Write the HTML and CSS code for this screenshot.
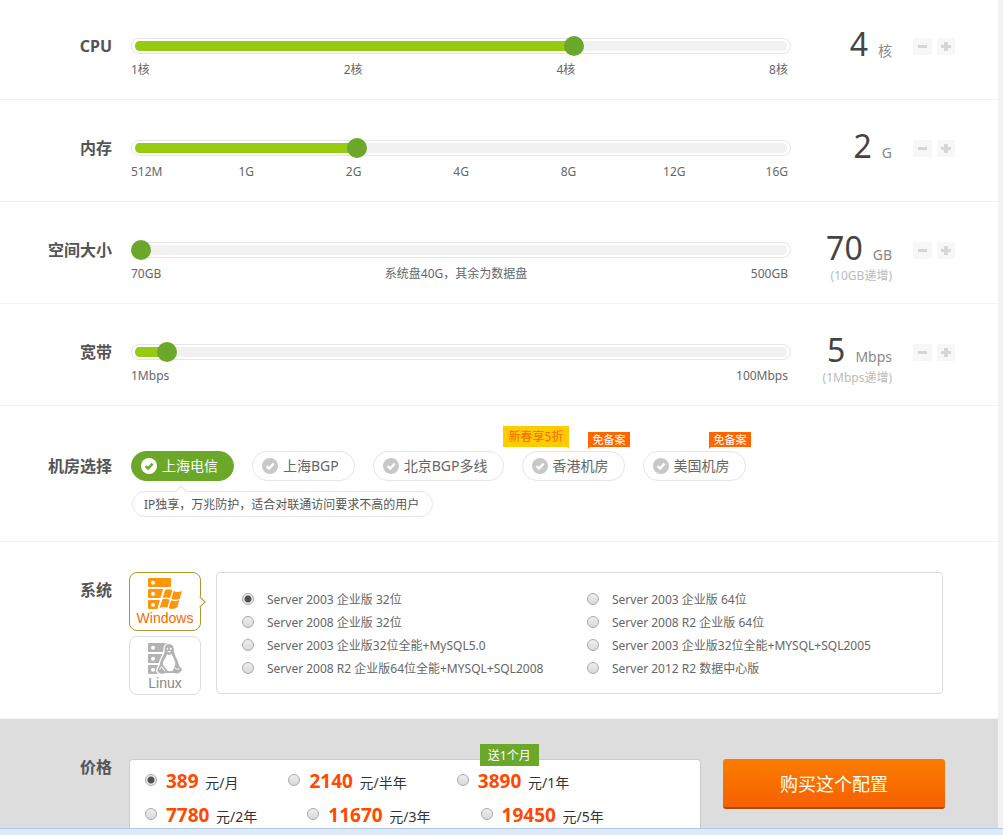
FILE: index.html
```html
<!DOCTYPE html>
<html lang="zh-CN">
<head>
<meta charset="utf-8">
<title>云主机配置</title>
<link rel="stylesheet" href="styles.css">
</head>
<body>
<svg class="sprite" aria-hidden="true">
  <symbol id="check" viewBox="0 0 16 16">
    <circle cx="8" cy="8" r="8" fill="currentColor" stroke="none"/>
    <path d="M4.6 8.2 7.1 10.6 11.6 5.6" fill="none" stroke-width="2.4"/>
  </symbol>
</svg>
<form class="config">
  <section class="row row--first">
    <label class="row__label" for="cpu">CPU</label>
    <div class="control">
      <div class="slider"><div class="slider__bar" style="--fill:67.7%"></div><input class="slider__input" id="cpu" type="range" min="0" max="1000" value="677"></div>
      <div class="scale"><span>1核</span><span>2核</span><span>4核</span><span>8核</span></div>
    </div>
    <div class="value"><div class="value__main"><b class="value__num">4</b><span class="value__unit">核</span></div></div>
    <div class="stepper"><button class="step step--minus" type="button" aria-label="减少"></button><button class="step step--plus" type="button" aria-label="增加"></button></div>
  </section>
  <section class="row">
    <label class="row__label" for="mem">内存</label>
    <div class="control">
      <div class="slider"><div class="slider__bar" style="--fill:33.8%"></div><input class="slider__input" id="mem" type="range" min="0" max="1000" value="338"></div>
      <div class="scale scale--mem"><span>512M</span><span>1G</span><span>2G</span><span>4G</span><span>8G</span><span>12G</span><span>16G</span></div>
    </div>
    <div class="value"><div class="value__main"><b class="value__num">2</b><span class="value__unit">G</span></div></div>
    <div class="stepper"><button class="step step--minus" type="button" aria-label="减少"></button><button class="step step--plus" type="button" aria-label="增加"></button></div>
  </section>
  <section class="row">
    <label class="row__label" for="disk">空间大小</label>
    <div class="control">
      <div class="slider"><div class="slider__bar" style="--fill:0%"></div><input class="slider__input" id="disk" type="range" min="70" max="500" value="70"></div>
      <div class="scale"><span>70GB</span><span>系统盘40G，其余为数据盘</span><span>500GB</span></div>
    </div>
    <div class="value"><div class="value__main"><b class="value__num">70</b><span class="value__unit">GB</span></div><div class="value__note">(10GB递增)</div></div>
    <div class="stepper"><button class="step step--minus" type="button" aria-label="减少"></button><button class="step step--plus" type="button" aria-label="增加"></button></div>
  </section>
  <section class="row">
    <label class="row__label" for="band">宽带</label>
    <div class="control">
      <div class="slider"><div class="slider__bar" style="--fill:4%"></div><input class="slider__input" id="band" type="range" min="1" max="100" value="5"></div>
      <div class="scale"><span>1Mbps</span><span>100Mbps</span></div>
    </div>
    <div class="value"><div class="value__main"><b class="value__num">5</b><span class="value__unit">Mbps</span></div><div class="value__note">(1Mbps递增)</div></div>
    <div class="stepper"><button class="step step--minus" type="button" aria-label="减少"></button><button class="step step--plus" type="button" aria-label="增加"></button></div>
  </section>

  <section class="row row--room">
    <div class="row__label">机房选择</div>
    <div class="control">
      <div class="rooms">
        <button class="room room--on" type="button"><svg class="room__icon"><use href="#check"/></svg>上海电信</button>
        <button class="room" type="button"><svg class="room__icon"><use href="#check"/></svg>上海BGP</button>
        <button class="room" type="button"><svg class="room__icon"><use href="#check"/></svg>北京BGP多线</button>
        <button class="room" type="button"><svg class="room__icon"><use href="#check"/></svg>香港机房<span class="promo">新春享5折</span><span class="flag">免备案</span></button>
        <button class="room" type="button"><svg class="room__icon"><use href="#check"/></svg>美国机房<span class="flag">免备案</span></button>
      </div>
      <div class="tip">IP独享，万兆防护，适合对联通访问要求不高的用户</div>
    </div>
  </section>

  <section class="row row--os">
    <div class="row__label">系统</div>
    <div class="os">
      <div class="os__tabs">
        <button class="os-tab os-tab--on" type="button">
          <svg class="os-tab__icon" viewBox="0 0 102 93" aria-hidden="true">
            <g fill="#ff950a"><rect width="69" height="27" rx="3"/><rect y="33" width="69" height="27" rx="3"/><rect y="66" width="69" height="27" rx="3"/></g>
            <g fill="#fff"><circle cx="15" cy="14" r="6"/><circle cx="15" cy="47" r="6"/><circle cx="15" cy="80" r="6"/><path d="M46 30Q60 26 75 33Q90 42 108 32L93 93H28Z"/></g>
            <g fill="#ff950a"><path d="M51 36Q62 31 73 37L66 61Q55 56 44 60Z"/><path d="M77 39Q89 45 102 39L95 63Q83 68 70 63Z"/><path d="M43 64Q54 60 65 65L58 89Q47 84 35 90Z"/><path d="M69 67Q82 72 94 67L88 88Q75 96 62 91Z"/></g>
          </svg>
          <span>Windows</span>
        </button>
        <button class="os-tab" type="button">
          <svg class="os-tab__icon" viewBox="0 0 102 93" aria-hidden="true">
            <g fill="#b3b3b3"><rect width="69" height="27" rx="3"/><rect y="33" width="69" height="27" rx="3"/><rect y="66" width="69" height="27" rx="3"/></g>
            <g fill="#fff"><circle cx="15" cy="14" r="6"/><circle cx="15" cy="47" r="6"/><circle cx="15" cy="80" r="6"/></g>
            <path d="M63 4C52 4 49 12 50 22C51 34 39 46 37 58C36 66 30 76 28 82C28 91 42 95 52 90H80C88 95 101 88 102 78C94 72 93 66 90 56C86 44 78 36 78 24C78 12 74 4 63 4Z" fill="#b3b3b3" stroke="#fff" stroke-width="8" paint-order="stroke"/>
            <path d="M57 33Q64 39 71 32C74 43 82 50 82 63C82 67 79 68 78 74Q77 84 66 85Q58 85 55 79L45 66C44 52 55 45 57 33Z" fill="#fff"/>
            <g fill="#fff"><ellipse cx="58" cy="17" rx="2" ry="3"/><ellipse cx="68" cy="17" rx="3" ry="3"/><path d="M57 26Q63 22 70 26Q64 30 57 26Z"/></g>
            <path d="M35 79 41 71 51 85" fill="none" stroke="#fff" stroke-width="3"/>
            <path d="M80 73Q83 81 94 78" fill="none" stroke="#fff" stroke-width="3"/>
          </svg>
          <span>Linux</span>
        </button>
      </div>
      <div class="os__list">
        <label class="opt"><input class="radio" type="radio" name="os" checked>Server 2003 企业版 32位</label>
        <label class="opt"><input class="radio" type="radio" name="os">Server 2003 企业版 64位</label>
        <label class="opt"><input class="radio" type="radio" name="os">Server 2008 企业版 32位</label>
        <label class="opt"><input class="radio" type="radio" name="os">Server 2008 R2 企业版 64位</label>
        <label class="opt"><input class="radio" type="radio" name="os">Server 2003 企业版32位全能+MySQL5.0</label>
        <label class="opt"><input class="radio" type="radio" name="os">Server 2003 企业版32位全能+MYSQL+SQL2005</label>
        <label class="opt"><input class="radio" type="radio" name="os">Server 2008 R2 企业版64位全能+MYSQL+SQL2008</label>
        <label class="opt"><input class="radio" type="radio" name="os">Server 2012 R2 数据中心版</label>
      </div>
    </div>
  </section>

  <section class="row row--price">
    <div class="row__label">价格</div>
    <div class="prices">
      <div class="prices__line">
        <label class="price"><input class="radio" type="radio" name="price" checked><span><b class="price__num">389</b> 元/月</span></label>
        <label class="price"><input class="radio" type="radio" name="price"><span><b class="price__num">2140</b> 元/半年</span></label>
        <label class="price"><input class="radio" type="radio" name="price"><span><b class="price__num">3890</b> 元/1年</span><span class="gift">送1个月</span></label>
      </div>
      <div class="prices__line">
        <label class="price"><input class="radio" type="radio" name="price"><span><b class="price__num">7780</b> 元/2年</span></label>
        <label class="price"><input class="radio" type="radio" name="price"><span><b class="price__num">11670</b> 元/3年</span></label>
        <label class="price"><input class="radio" type="radio" name="price"><span><b class="price__num">19450</b> 元/5年</span></label>
      </div>
    </div>
    <button class="buy" type="button">购买这个配置</button>
  </section>
</form>
<div class="statusbar"></div>
</body>
</html>
```
FILE: styles.css
```css
* { box-sizing: border-box; }
body {
  margin: 0;
  min-height: 100vh;
  display: flex;
  flex-direction: column;
  background: #f2f2f2;
  color: #666;
  font: 12px/18px "Noto Sans", "Noto Sans CJK SC", sans-serif;
}
button { font: inherit; color: inherit; padding: 0; cursor: pointer; }
.sprite { display: none; }

.config {
  flex: 1;
  display: flex;
  flex-direction: column;
  margin-right: 5px;
  background: #fff;
}

/* rows */
.row {
  display: grid;
  grid-template-columns: 113px minmax(0, 1fr) 84px 44px;
  column-gap: 18px;
  align-items: start;
  min-height: 102px;
  padding: 25px 43px 0 0;
  border-bottom: 1px solid #f2f2f2;
}
.row--first { padding-top: 23px; min-height: 100px; }
.row__label {
  margin-top: 13px;
  padding-right: 1px;
  font-size: 16px;
  line-height: 20px;
  font-weight: bold;
  text-align: right;
  color: #555;
}

/* slider */
.slider { display: grid; align-items: center; margin-top: 13px; }
.slider__bar {
  grid-area: 1 / 1;
  height: 16px;
  padding: 2px 3px;
  border: 1px solid #e5e5e5;
  border-radius: 8px;
  background: linear-gradient(to right, #97cb12 var(--fill), #f1f1f1 var(--fill)) content-box;
}
.slider__input {
  grid-area: 1 / 1;
  appearance: none;
  width: 100%;
  height: 20px;
  margin: 0;
  background: none;
}
.slider__input::-webkit-slider-thumb {
  appearance: none;
  width: 20px;
  height: 20px;
  border-radius: 50%;
  background: #6ba82a;
}
.scale {
  display: flex;
  justify-content: space-between;
  margin-top: 5px;
  padding-right: 3px;
}
.scale--mem {
  display: grid;
  grid-template-columns: repeat(4, 107fr) repeat(2, 102fr) auto;
}

.value { padding-right: 1px; text-align: right; white-space: nowrap; }
.value__main {
  display: flex;
  justify-content: flex-end;
  align-items: baseline;
  gap: 10px;
  height: 40px;
  line-height: 42px;
}
.value__num { font-size: 32px; font-weight: normal; color: #444; }
.value__unit { font-size: 14px; color: #888; }
.value__note { color: #bbb; }

.stepper { display: flex; justify-content: flex-end; gap: 5px; margin-top: 15px; }
.step {
  width: 18px;
  height: 17px;
  border: 0;
  border-radius: 1px;
  background: linear-gradient(#d6d6d6, #d6d6d6) center / 9px 3px no-repeat #f7f7f7;
}
.step--minus { width: 19px; }
.step--plus {
  background:
    linear-gradient(#d6d6d6, #d6d6d6) center / 10px 3px no-repeat,
    linear-gradient(#d6d6d6, #d6d6d6) center / 4px 9px no-repeat #f7f7f7;
}

/* machine room */
.row--room {
  grid-template-columns: 113px minmax(0, 1fr);
  padding: 45px 43px 24px 0;
}
.row--room .row__label { margin-top: 0; line-height: 30px; }
.rooms { display: flex; gap: 18px; }
.room {
  position: relative;
  display: flex;
  align-items: center;
  gap: 5px;
  height: 30px;
  padding: 0 15px 0 9px;
  border: 1px solid #e5e5e5;
  border-radius: 15px;
  background: #fff;
  font-size: 14px;
  white-space: nowrap;
}
.room--on { border-color: #6ba82a; background: #6ba82a; color: #fff; }
.room__icon { width: 16px; height: 16px; color: #c8c8c8; stroke: #fff; }
.room--on .room__icon { color: #fff; stroke: #6ba82a; }
.promo, .flag { position: absolute; }
.promo {
  left: -20px;
  bottom: 33px;
  height: 21px;
  padding: 0 6px;
  background: #fc0;
  color: #f60;
  font-size: 12px;
  line-height: 21px;
}
.flag {
  right: -6px;
  bottom: 33px;
  height: 15px;
  padding: 0 4px 0 5px;
  background: #f60;
  color: #fff;
  font-size: 11px;
  line-height: 15px;
}
.promo::after, .flag::after {
  content: "";
  position: absolute;
  top: 100%;
  border-top: 2px solid #fc0;
}
.promo::after { right: 0; border-left: 2px solid transparent; }
.flag::after { left: 0; border-top-color: #f60; border-right: 2px solid transparent; }
.tip {
  position: relative;
  width: fit-content;
  height: 26px;
  margin: 10px 0 0 1px;
  padding: 0 13px 0 11px;
  border: 1px solid #e5e5e5;
  border-radius: 13px;
  line-height: 25px;
  color: #555;
}
.tip::before {
  content: "";
  position: absolute;
  top: -5px;
  left: 44px;
  width: 7px;
  height: 7px;
  border: solid #e5e5e5;
  border-width: 1px 0 0 1px;
  background: #fff;
  transform: rotate(45deg);
}

/* operating system */
.row--os {
  grid-template-columns: 113px minmax(0, 1fr);
  column-gap: 16px;
  padding: 30px 55px 23px 0;
}
.row--os .row__label { margin-top: 0; line-height: 36px; }
.os { display: flex; align-items: flex-start; gap: 15px; }
.os__tabs { display: flex; flex-direction: column; gap: 5px; width: 72px; }
.os-tab {
  position: relative;
  display: flex;
  flex-direction: column;
  align-items: center;
  height: 59px;
  padding-top: 6px;
  border: 1px solid #dcdcdc;
  border-radius: 8px;
  background: #fff;
  color: #888;
  font: 14px/18px "Liberation Sans", Arial, sans-serif;
}
.os-tab--on { padding-top: 5px; border-color: #ab9a2a; color: #f26a0a; }
.os-tab--on::after {
  content: "";
  position: absolute;
  top: 25px;
  right: -4px;
  width: 7px;
  height: 7px;
  border: solid #ab9a2a;
  border-width: 1px 1px 0 0;
  background: #fff;
  transform: rotate(45deg);
}
.os-tab__icon { width: 34px; height: 31px; }
.os__list {
  flex: 1;
  display: grid;
  grid-template-columns: 1fr 1fr;
  padding: 15px 10px 13px 25px;
  border: 1px solid #dcdcdc;
  border-radius: 4px;
}
.opt { display: flex; align-items: center; gap: 13px; height: 23px; white-space: nowrap; }
.radio {
  appearance: none;
  width: 12px;
  height: 12px;
  margin: 0;
  border: 1px solid #aaa;
  border-radius: 50%;
  background: linear-gradient(#efefef, #d8d8d8);
}
.opt .radio { margin-bottom: 1px; }
.radio:checked { background: radial-gradient(circle, #505050 3px, #ececec 4px); }

/* price */
.row--price {
  flex: 1;
  grid-template-columns: 113px minmax(0, 1fr) 222px;
  column-gap: 0;
  padding: 40px 53px 0 0;
  border: 0;
  background: #ddd;
}
.row--price .row__label { margin-top: 0; line-height: 16px; }
.prices {
  align-self: stretch;
  display: flex;
  flex-direction: column;
  gap: 6px;
  margin: 0 22px 0 16px;
  padding: 6px 0 0 15px;
  border: 1px solid #ccc;
  border-bottom: 0;
  border-radius: 4px 4px 0 0;
  background: #fff;
}
.prices__line { display: flex; gap: 50px; height: 28px; }
.price {
  position: relative;
  display: flex;
  align-items: center;
  gap: 9px;
  font-size: 14px;
  line-height: 28px;
  color: #333;
  white-space: nowrap;
}
.price > span:not(.gift) { padding-top: 3px; }
.price__num { margin-right: 3px; font-size: 19px; color: #ff4800; }
.gift {
  position: absolute;
  left: 23px;
  bottom: 100%;
  height: 22px;
  padding: 0 8px;
  background: #6ba82a;
  color: #fff;
  font-size: 12px;
  line-height: 23px;
}
.buy {
  height: 50px;
  padding-top: 2px;
  border: 0;
  border-bottom: 2px solid #b04a0c;
  border-radius: 3px;
  background: linear-gradient(#fb7d00, #f66000);
  color: #fff;
  font-size: 18px;
}
.statusbar { height: 7px; border-top: 1px solid #b5c9e4; background: #dcebfc; }
```
